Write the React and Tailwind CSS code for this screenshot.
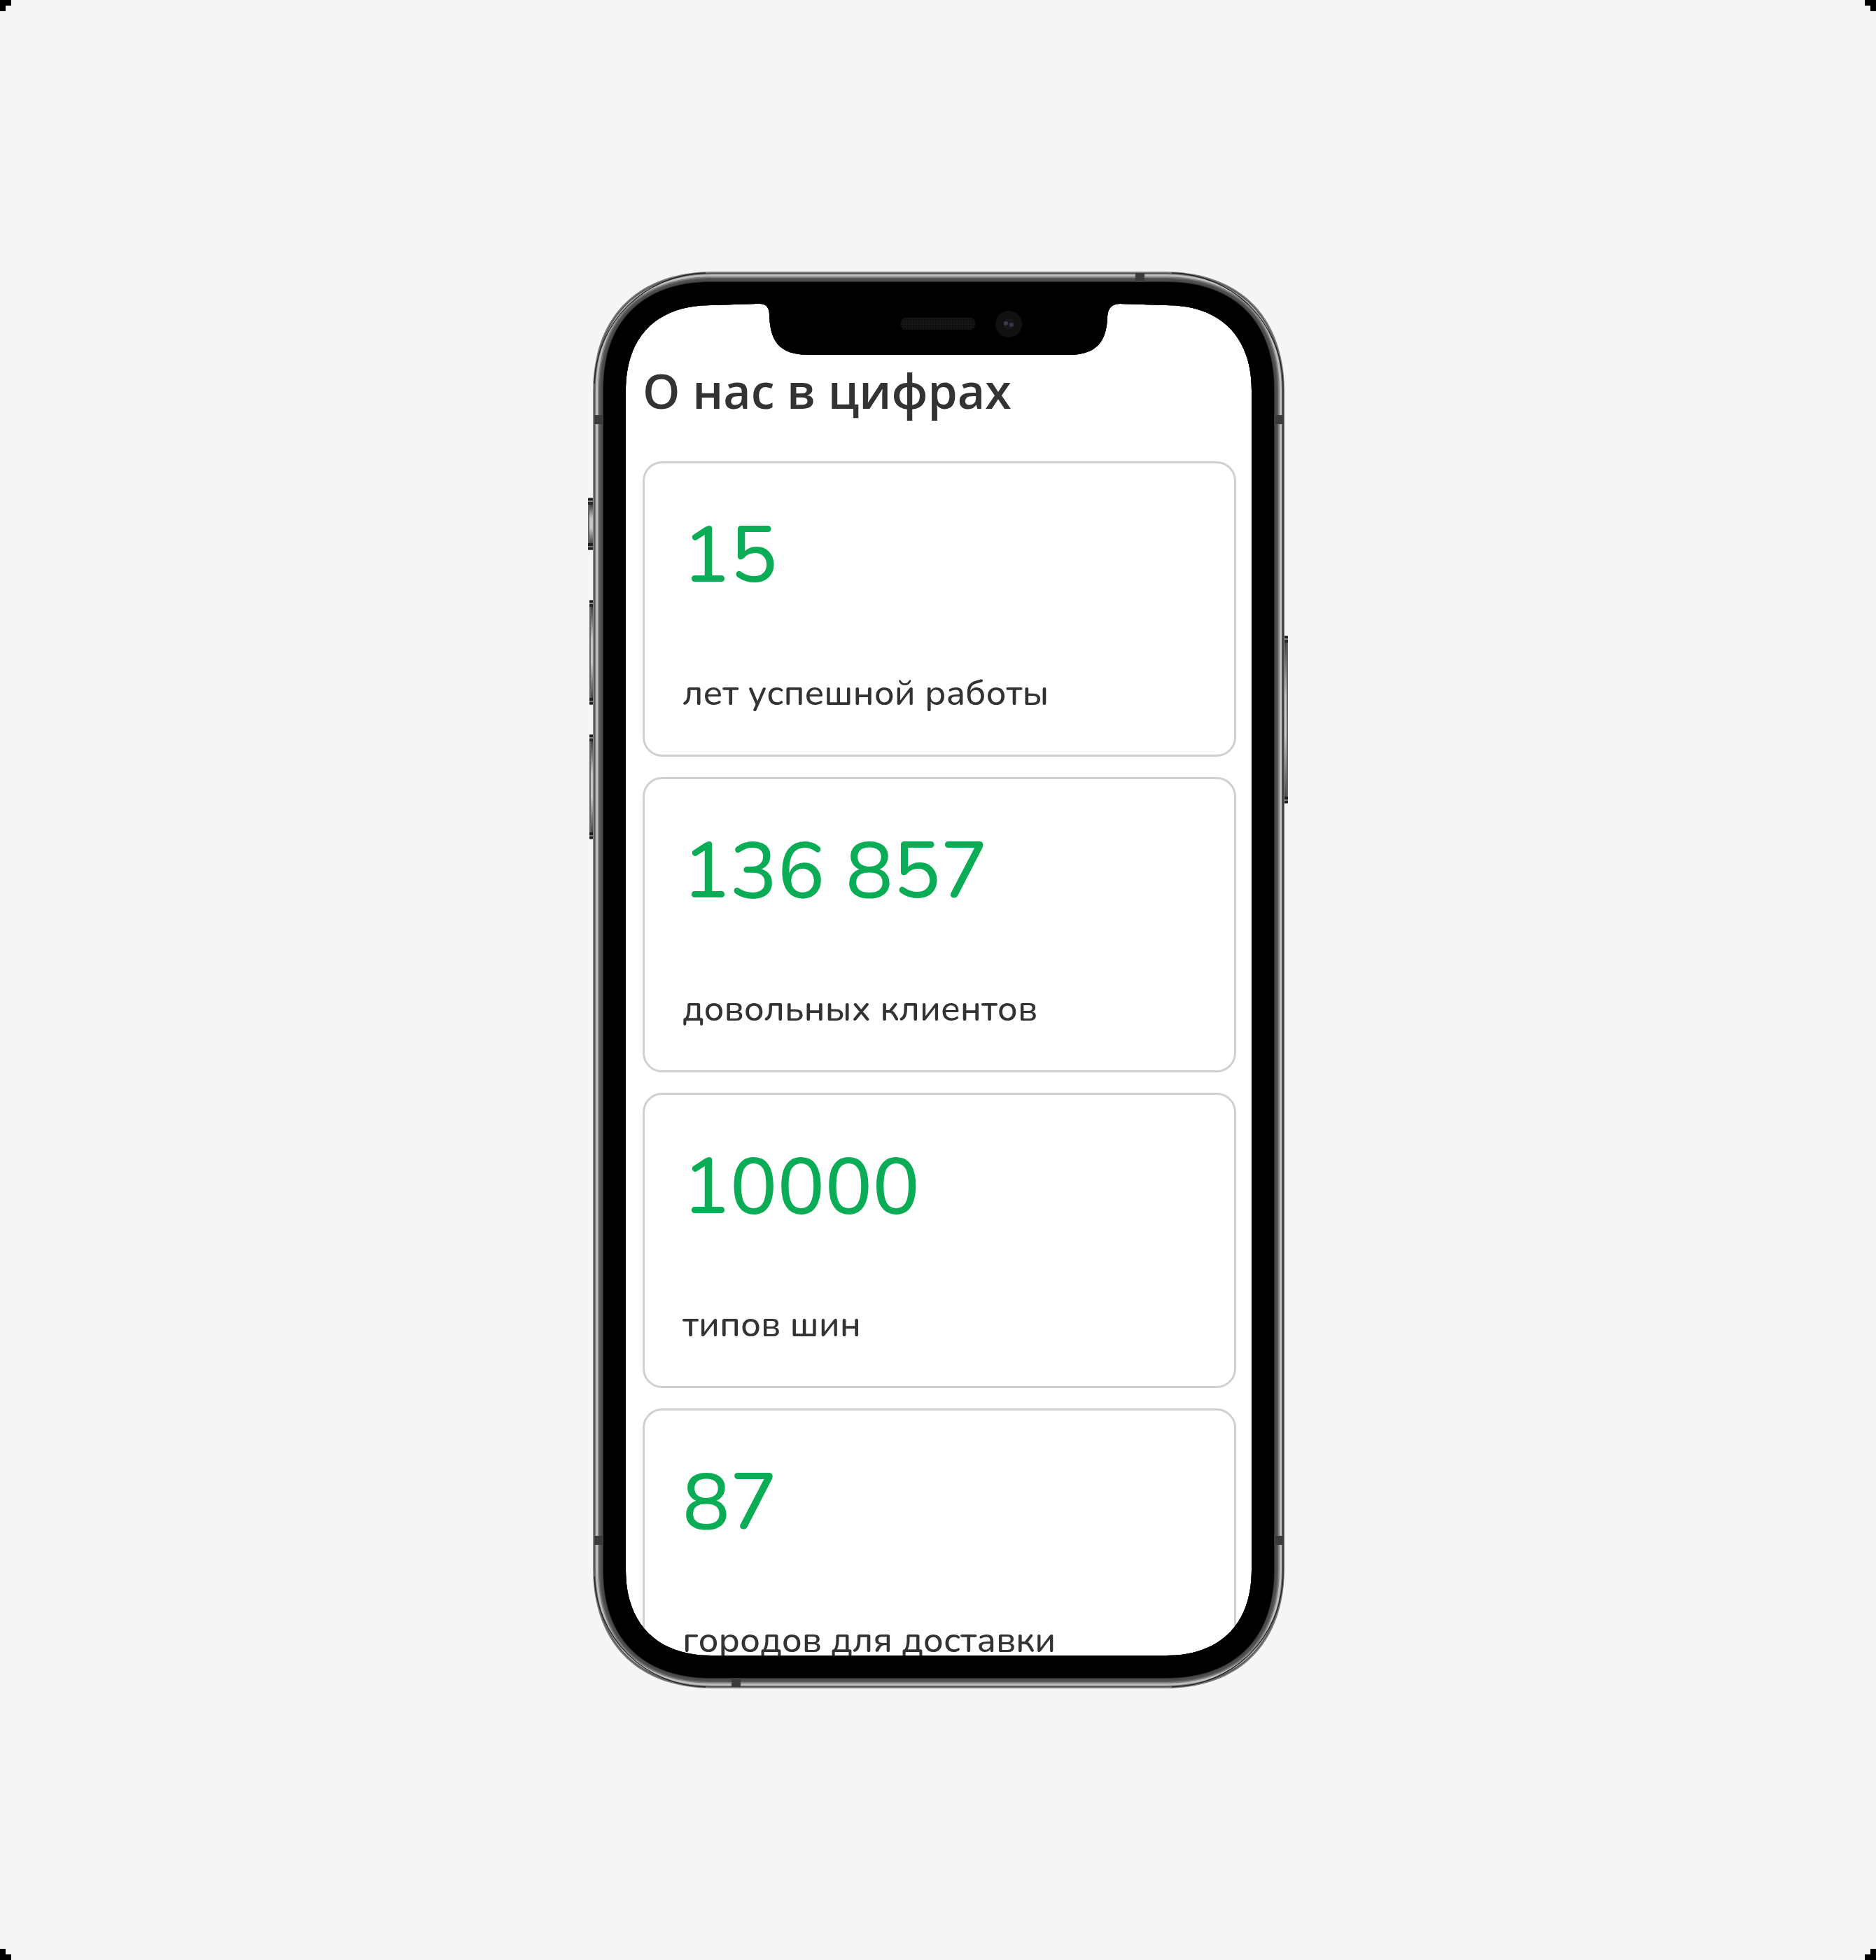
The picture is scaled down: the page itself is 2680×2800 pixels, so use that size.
import React from "react";

const stats = [
  { value: "15", label: "лет успешной работы" },
  { value: "136 857", label: "довольных клиентов" },
  { value: "10000", label: "типов шин" },
  { value: "87", label: "городов для доставки" },
];

// Rounded rectangle with smooth (continuous curvature) corners.
function smoothRect(x0, y0, x1, y1, l, a) {
  return [
    `M${x0} ${y0 + l}`,
    `C${x0} ${y0 + a} ${x0 + a} ${y0} ${x0 + l} ${y0}`,
    `H${x1 - l}`,
    `C${x1 - a} ${y0} ${x1} ${y0 + a} ${x1} ${y0 + l}`,
    `V${y1 - l}`,
    `C${x1} ${y1 - a} ${x1 - a} ${y1} ${x1 - l} ${y1}`,
    `H${x0 + l}`,
    `C${x0 + a} ${y1} ${x0} ${y1 - a} ${x0} ${y1 - l}`,
    "Z",
  ].join(" ");
}

// Body outline moved inwards by n units.
const ring = (n) =>
  smoothRect(7 + n, n, 995 - n, 2024 - n, 172 - (n * 5) / 4, 64 - n / 2);

const SCREEN =
  "M54 170 C54 92 99 48 176 48 L240 46 H246 Q258 46 259 60 C260 98 271 119 317 119 H687 C733 119 741 92 742 64 Q743 46 760 46 L826 48 C903 48 948 92 948 170 V1855 C948 1932 903 1977 826 1977 H176 C99 1977 54 1932 54 1855 Z";

const bands = [
  [0, "#7c7c7c"],
  [2, "#4c4c4c"],
  [3, "#7a7a7a"],
  [4, "#bdbdbd"],
  [7, "#7e7e7e"],
  [9, "#585858"],
  [11, "#4b4b4b"],
  [14, "#2a2a2a"],
];

function SideButton({ x, y, w, h }) {
  return (
    <g>
      <rect x={x} y={y} width={w} height={h} rx="1" fill="#666" />
      <rect x={x + 2} y={y + 10} width={w - 4} height={h - 20} fill="url(#btn)" />
      <rect x={x} y={y + 1} width={w} height="3" fill="#1e1e1e" />
      <rect x={x} y={y + 4} width={w} height="2" fill="#8c8c8c" />
      <rect x={x} y={y + 6} width={w} height="4" fill="#2a2a2a" />
      <rect x={x} y={y + h - 10} width={w} height="4" fill="#202020" />
      <rect x={x} y={y + h - 6} width={w} height="2" fill="#777" />
      <rect x={x} y={y + h - 4} width={w} height="3" fill="#222" />
    </g>
  );
}

function PhoneFrame() {
  return (
    <svg
      className="pointer-events-none absolute inset-0 h-full w-full"
      viewBox="0 0 1000 2024"
      fill="none"
      aria-hidden="true"
    >
      <defs>
        <linearGradient id="btn" x1="0" y1="0" x2="0" y2="1">
          <stop offset="0" stopColor="#444" />
          <stop offset="0.35" stopColor="#c4c4c4" />
          <stop offset="0.6" stopColor="#c8c8c8" />
          <stop offset="1" stopColor="#4a4a4a" />
        </linearGradient>
        <pattern id="mesh" width="4" height="4" patternUnits="userSpaceOnUse">
          <rect width="4" height="4" fill="#151515" />
          <rect width="2" height="2" fill="#0b0b0b" />
        </pattern>
      </defs>

      <SideButton x={0} y={323} w={9} h={75} />
      <SideButton x={2} y={469} w={7} h={150} />
      <SideButton x={2} y={661} w={7} h={150} />
      <SideButton x={993} y={520} w={7} h={240} />

      {bands.map(([n, color]) => (
        <path key={n} d={`${ring(n)} ${SCREEN}`} fill={color} fillRule="evenodd" />
      ))}
      <path d={`${ring(15)} ${SCREEN}`} fill="#000" fillRule="evenodd" />

      <g stroke="#262626" strokeWidth="1.4">
        <path d="M9 160 C12 73 80 4 168 2" />
        <path d="M834 2 C922 4 990 73 993 160 V1864 C990 1951 922 2020 834 2022" />
        <path d="M9 1864 C12 1951 80 2020 168 2022" />
      </g>

      <g fill="#3b3b3b">
        <rect x="9" y="205" width="13" height="13" />
        <rect x="980" y="205" width="13" height="13" />
        <rect x="9" y="1806" width="13" height="13" />
        <rect x="980" y="1806" width="13" height="13" />
        <rect x="782" y="2" width="13" height="13" />
        <rect x="205" y="2009" width="13" height="13" />
      </g>

      <rect x="447" y="66" width="106" height="17" rx="7" fill="url(#mesh)" />
      <circle cx="601" cy="75" r="19" fill="#111112" />
      <circle cx="601" cy="75" r="8" fill="#17171b" />
      <circle cx="597" cy="74" r="3" fill="#3a3c4c" />
      <circle cx="605" cy="76" r="3" fill="#34364a" />
    </svg>
  );
}

function StatCard({ value, label }) {
  return (
    <li className="flex h-[422px] shrink-0 flex-col justify-between rounded-[28px] border-3 border-[#d0d0d0] px-[54px] pt-[66px] pb-14">
      <strong className="font-['Nunito',sans-serif] text-[113px] leading-[132px] font-medium whitespace-nowrap text-[#0aad56]">
        {value}
      </strong>
      <span className="font-['Nunito',sans-serif] text-[51px] leading-[64px] font-medium whitespace-nowrap text-[#333]">
        {label}
      </span>
    </li>
  );
}

function CornerMark({ className }) {
  return (
    <svg className={`absolute h-4 w-4 ${className}`} viewBox="0 0 16 16" aria-hidden="true">
      <path d="M0 0H16V8H8V16H0Z" fill="#000" />
    </svg>
  );
}

export default function App() {
  return (
    <main className="relative flex min-h-screen items-center justify-center bg-[#f5f5f5]">
      <CornerMark className="top-0 left-0" />
      <CornerMark className="top-0 right-0 -scale-x-100" />
      <CornerMark className="bottom-0 left-0 -scale-y-100" />
      <CornerMark className="right-0 bottom-0 -scale-100" />

      <div className="relative flex aspect-[1000/2024] w-full max-w-[1000px] overflow-hidden px-[54px] pt-[46px] pb-[47px]">
        <section className="min-h-0 flex-1 overflow-hidden rounded-[60px] bg-white pt-[82px] pr-5 pl-6">
          <h1 className="font-['Open_Sans','Noto_Sans',sans-serif] text-[68px] leading-[84px] font-semibold whitespace-nowrap text-[#333]">
            О нас в цифрах
          </h1>
          <ul className="mt-[59px] flex flex-col gap-[29px]">
            {stats.map((s) => (
              <StatCard key={s.value} value={s.value} label={s.label} />
            ))}
          </ul>
        </section>
        <PhoneFrame />
      </div>
    </main>
  );
}
